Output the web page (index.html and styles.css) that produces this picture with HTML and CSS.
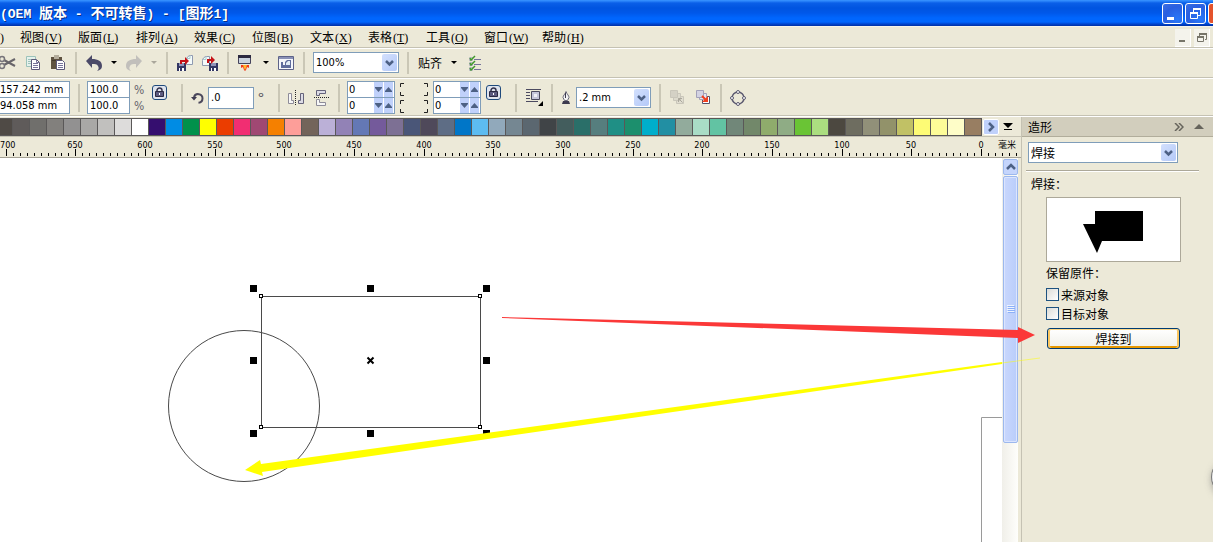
FILE: index.html
```html
<!DOCTYPE html>
<html lang="zh-CN">
<head>
<meta charset="utf-8">
<title>图形1</title>
<link rel="stylesheet" href="styles.css">
</head>
<body>
<div class="app">
  <header class="titlebar">
    <h1 class="title"><span class="mono">(OEM </span>版本<span class="mono"> - </span>不可转售<span class="mono">) - [</span>图形<span class="mono">1]</span></h1>
    <div class="winbtns">
      <button class="winbtn" aria-label="最小化"><svg width="19" height="19"><path d="M4 13h7v3H4z" fill="#fff"/></svg></button>
      <button class="winbtn" aria-label="还原"><svg width="19" height="19" fill="none" stroke="#fff"><path d="M7.500 8V5M14.500 5v6.500H12"/><path d="M7 5h8" stroke-width="2"/><path d="M4.500 8.500h7v6h-7z"/><path d="M4 9h8" stroke-width="2"/></svg></button>
      <button class="winbtn close" aria-label="关闭"></button>
    </div>
  </header>

  <nav class="menubar">
    <span class="menu cut"><span class="key">)</span></span>
    <button class="menu">视图<span class="key">(<u>V</u>)</span></button>
    <button class="menu">版面<span class="key">(<u>L</u>)</span></button>
    <button class="menu">排列<span class="key">(<u>A</u>)</span></button>
    <button class="menu">效果<span class="key">(<u>C</u>)</span></button>
    <button class="menu">位图<span class="key">(<u>B</u>)</span></button>
    <button class="menu">文本<span class="key">(<u>X</u>)</span></button>
    <button class="menu">表格<span class="key">(<u>T</u>)</span></button>
    <button class="menu">工具<span class="key">(<u>O</u>)</span></button>
    <button class="menu">窗口<span class="key">(<u>W</u>)</span></button>
    <button class="menu">帮助<span class="key">(<u>H</u>)</span></button>
    <div class="docbtns">
      <button class="docbtn" aria-label="最小化文档"><svg width="16" height="18"><path d="M4 11h6v2H4z" fill="#77756a"/></svg></button>
      <button class="docbtn" aria-label="还原文档"><svg width="16" height="18" fill="none" stroke="#77756a"><path d="M5.500 7V4.500h7v6H11"/><path d="M5 5h8" stroke-width="2"/><path d="M3.500 8.500h6v4h-6z"/><path d="M3 8h7" stroke-width="2"/></svg></button>
      <button class="docbtn" aria-label="关闭文档"></button>
    </div>
  </nav>

  <div class="toolbar">
    <div class="group first">
      <button class="tool" aria-label="剪切"><svg width="16" height="16" fill="none"><path d="M4 5l11 6M4 10l11-6" stroke="#68656a" stroke-width="2"/><circle cx="2" cy="4" r="2.500" stroke="#77747a" stroke-width="1.500"/><circle cx="2" cy="11" r="2.500" stroke="#77747a" stroke-width="1.500"/></svg></button>
      <button class="tool" aria-label="复制"><svg width="16" height="16"><path d="M1.500 1.500h9v10h-9z" fill="#e6f1ec" stroke="#9cc3ba"/><path d="M3 4.500h6M3 6.500h3M3 8.500h3" stroke="#9cc3ba"/><path d="M6.500 4.500h5l3 3v7h-8z" fill="#fff" stroke="#5c5978"/><path d="M8 8.500h5M8 10.500h5M8 12.500h5M11.500 5v2.500H14" fill="none" stroke="#77749a"/></svg></button>
      <button class="tool" aria-label="粘贴"><svg width="16" height="16"><path d="M1 2h11v12H1z" fill="#5e5240"/><path d="M4 0h5v4H4z" fill="#b4ad9c"/><path d="M2 5.500h9" stroke="#443a2c"/><path d="M6.500 5.500h6l2 2v7h-8z" fill="#fff" stroke="#5c5978"/><path d="M8 8.500h5M8 10.500h5M8 12.500h5" stroke="#77749a"/></svg></button>
    </div>
    <div class="group">
      <button class="tool" aria-label="撤消"><svg width="16" height="16"><path d="M0 6l6-6v4c6 0 10 2 10 7 0 3-2 4-5 5 2-2 2-3 1-5-1-2-3-2-6-2v4z" fill="#4b4a68"/></svg></button>
      <button class="drop" aria-label="撤消列表"><svg width="6" height="3"><path d="M0 0h6L3 3z"/></svg></button>
      <button class="tool" aria-label="重做" disabled><svg width="16" height="16"><path d="M16 6l-6-6v4C4 4 0 6 0 11c0 3 2 4 5 5-2-2-2-3-1-5 1-2 3-2 6-2v4z" fill="#c1bfbb"/></svg></button>
      <button class="drop" aria-label="重做列表" disabled><svg width="6" height="3"><path d="M0 0h6L3 3z" fill="#aaa79b"/></svg></button>
    </div>
    <div class="group">
      <button class="tool" aria-label="导入"><svg width="16" height="16"><path d="M9.500 4.500c0-2 2-4 4-4h2v9h-6z" fill="#f4fafa" stroke="#8f9ab0"/><path d="M9 3.500h4V1" fill="none" stroke="#a9cfd0"/><path d="M0 8h9v8H0z" fill="#333763"/><path d="M2 8h5v3H2z" fill="#8f93b8"/><path d="M2 13h5v3H2z" fill="#fff"/><path d="M3 13h2v3H3z" fill="#333763"/><path d="M3 5h5V2l4 4-4 4V7H5v2H3z" fill="#c51217"/></svg></button>
      <button class="tool" aria-label="导出"><svg width="16" height="16"><path d="M.5 5.500c0-2 2-4 4-4h3v9h-7z" fill="#f4fafa" stroke="#8f9ab0"/><path d="M1 4.500h3V2" fill="none" stroke="#a9cfd0"/><path d="M7 8h9v8H7z" fill="#333763"/><path d="M9 8h5v3H9z" fill="#8f93b8"/><path d="M9 13h5v3H9z" fill="#fff"/><path d="M10 13h2v3h-2z" fill="#333763"/><path d="M5 4h4V1l4 4-4 4V6H7v2H5z" fill="#c51217"/></svg></button>
    </div>
    <div class="group">
      <button class="tool" aria-label="应用程序启动器"><svg width="16" height="16"><path d="M.5.500h12v8H.5z" fill="#c9d3de" stroke="#45435c"/><path d="M0 0h13v3H0z" fill="#2c2a40"/><path d="M3 10h8v3l-2-1-1 3-1 1-1-1-1-3-2 1z" fill="#f2381a"/><path d="M5 10h4l-1 3-1 2-1-2z" fill="#ffb62a"/></svg></button>
      <button class="drop" aria-label="启动器列表"><svg width="6" height="3"><path d="M0 0h6L3 3z"/></svg></button>
      <button class="tool" aria-label="欢迎屏幕"><svg width="16" height="16"><path d="M.5 1.500h15v13H.5z" fill="#f4f6fb" stroke="#5d6388"/><path d="M1 2h14v2H1z" fill="#8a91b6"/><path d="M3 7h2v3h2V7l2-2h4v8H3z" fill="#5e6c9c"/><path d="M8 8l2-2h2v4H8z" fill="#dfeaf5"/></svg></button>
    </div>
    <div class="group tight">
      <div class="combo zoom">
        <select aria-label="缩放级别"><option>100%</option></select>
        <svg class="chev" width="15" height="17"><path d="M4 7l3.500 3.500L11 7" fill="none" stroke="#4d6185" stroke-width="2.500"/></svg>
      </div>
    </div>
    <div class="group last">
      <button class="snap">贴齐</button>
      <button class="drop" aria-label="贴齐列表"><svg width="6" height="3"><path d="M0 0h6L3 3z"/></svg></button>
      <button class="tool options-icon" aria-label="选项"><svg width="14" height="16" fill="none"><path d="M6 4.500h7M6 9.500h7M6 14.500h7" stroke="#77749a"/><path d="M1.500 2.500h3v3h-3zM1.500 7.500h3v3h-3zM1.500 12.500h3v3h-3z" stroke="#b9b6c4"/><path d="M2 3l1 2 4-4M2 8l1 2 4-4M2 13l1 2 4-4" stroke="#3f9a2c" stroke-width="1.500"/></svg></button>
    </div>
  </div>

  <div class="toolbar props">
    <div class="group first size">
      <div class="stack"><input class="field" aria-label="宽度" value="157.242 mm"><input class="field" aria-label="高度" value="94.058 mm"></div>
    </div>
    <div class="group scale">
      <div class="stack"><input class="field" aria-label="水平缩放" value="100.0"><input class="field" aria-label="垂直缩放" value="100.0"></div>
      <div class="units"><span>%</span><span>%</span></div>
      <button class="lock" aria-label="锁定比率"><svg width="11" height="11"><path d="M3 5V3.500a2.500 2.500 0 015 0V5" fill="none" stroke="#35344f" stroke-width="1.500"/><path d="M1.500 4.500h8v5h-8z" fill="#5b5a80" stroke="#2a2942"/><path d="M5 6h1v2H5z" fill="#fff"/></svg></button>
    </div>
    <div class="group angle">
      <svg width="13" height="12" fill="none"><path d="M3 6V5.500a4.300 4.300 0 114.500 5.200" stroke="#4b485c" stroke-width="2"/><path d="M0 5h6L3 8.500z" fill="#3f3c52"/></svg>
      <input class="field" aria-label="旋转角度" value=".0">
      <span class="deg">°</span>
    </div>
    <div class="group mirror">
      <button class="tool" aria-label="水平镜像"><svg width="16" height="16" fill="none"><path d="M.5 3.500h3v7h2v3h-5z" fill="#f7f7f7" stroke="#8e8c99"/><path d="M15.500 3.500h-3v7h-2v3h5z" fill="#dddce6" stroke="#65637a"/><path d="M7.500 0v16" stroke="#222" stroke-dasharray="1 1"/></svg></button>
      <button class="tool" aria-label="垂直镜像"><svg width="16" height="16" fill="none"><path d="M2.500.5h9v3h-6v2h-3z" fill="#dddce6" stroke="#65637a"/><path d="M2.500 9.500h3v3h6v3h-9z" fill="#f7f7f7" stroke="#8e8c99"/><path d="M0 7.500h16" stroke="#222" stroke-dasharray="1 1"/></svg></button>
    </div>
    <div class="group corners">
      <div class="stack">
        <div class="spin"><input aria-label="左上角圆滑度" value="0"><button aria-label="减少"><svg width="9" height="15"><path d="M1 5h7v1L4.500 10 1 6z" fill="#4d6185"/></svg></button><button aria-label="增加"><svg width="9" height="15"><path d="M1 10h7V9L4.500 5 1 9z" fill="#4d6185"/></svg></button></div>
        <div class="spin"><input aria-label="左下角圆滑度" value="0"><button aria-label="减少"><svg width="9" height="15"><path d="M1 5h7v1L4.500 10 1 6z" fill="#4d6185"/></svg></button><button aria-label="增加"><svg width="9" height="15"><path d="M1 10h7V9L4.500 5 1 9z" fill="#4d6185"/></svg></button></div>
      </div>
      <svg width="28" height="30" fill="none" stroke="#222"><path d="M4 .5H.5V4M.5 9v3.500H4M24 .5h3.500V4M27.500 9v3.500H24M4 17.500H.5V21M.5 26v3.500H4M24 17.500h3.500V21M27.500 26v3.500H24"/></svg>
      <div class="stack">
        <div class="spin"><input aria-label="右上角圆滑度" value="0"><button aria-label="减少"><svg width="9" height="15"><path d="M1 5h7v1L4.500 10 1 6z" fill="#4d6185"/></svg></button><button aria-label="增加"><svg width="9" height="15"><path d="M1 10h7V9L4.500 5 1 9z" fill="#4d6185"/></svg></button></div>
        <div class="spin"><input aria-label="右下角圆滑度" value="0"><button aria-label="减少"><svg width="9" height="15"><path d="M1 5h7v1L4.500 10 1 6z" fill="#4d6185"/></svg></button><button aria-label="增加"><svg width="9" height="15"><path d="M1 10h7V9L4.500 5 1 9z" fill="#4d6185"/></svg></button></div>
      </div>
      <button class="lock" aria-label="全部圆角"><svg width="11" height="11"><path d="M3 5V3.500a2.500 2.500 0 015 0V5" fill="none" stroke="#35344f" stroke-width="1.500"/><path d="M1.500 4.500h8v5h-8z" fill="#5b5a80" stroke="#2a2942"/><path d="M5 6h1v2H5z" fill="#fff"/></svg></button>
    </div>
    <div class="group wrap">
      <button class="tool" aria-label="段落文本换行"><svg width="18" height="17"><path d="M0 .5h15M0 3.500h4M0 6.500h4M0 9.500h4M0 12.500h12" stroke="#4c4a60"/><path d="M5.500 2.500h8v8h-8z" fill="#c5c5da" stroke="#4c4a60"/><path d="M8 5h3v3H8z" fill="#f0f0f8"/><path d="M17 12v5h-5z"/></svg></button>
    </div>
    <div class="group pen">
      <svg width="10" height="14"><path d="M5 .5c1 3 3 4 3 6L6.500 9.500h-3L2 6.500c0-2 2-3 3-6z" fill="#f3f3f3" stroke="#6a687a"/><path d="M4.500 2v5" stroke="#3d3b4f"/><path d="M2 10h6l1 3H1z" fill="#3d3b4f"/></svg>
      <div class="combo outline">
        <select aria-label="轮廓宽度"><option>.2 mm</option></select>
        <svg class="chev" width="15" height="17"><path d="M4 7l3.500 3.500L11 7" fill="none" stroke="#4d6185" stroke-width="2.500"/></svg>
      </div>
    </div>
    <div class="group order">
      <button class="tool" aria-label="到图层前面" disabled><svg width="15" height="15" stroke="#c9c6ba"><path d="M6.500 6.500h7v7h-7z" fill="#e0ddd0"/><path d="M3.500 3.500h7v7h-7z" fill="#dddacd"/><path d="M.5.500h7v7h-7z" fill="#d4d1c5"/><path d="M8.500 8.500l4 4M8.500 12V8.500H12" stroke="#aaa79c" fill="none"/></svg></button>
      <button class="tool" aria-label="到图层后面"><svg width="15" height="15"><path d="M6.500 6.500h7v7h-7z" fill="#fff" stroke="#55536a"/><path d="M3.500 3.500h7v6h-7z" fill="#e6e5ef" stroke="#a3a1b9"/><path d="M.5.500h7v7h-7z" fill="#d3d2e2" stroke="#a3a1b9"/><path d="M6 6l4 4" stroke="#f2401f" stroke-width="2"/><path d="M12 6v6H6z" fill="#f2401f"/></svg></button>
    </div>
    <div class="group last">
      <button class="tool" aria-label="转换为曲线"><svg width="16" height="16" fill="#fff" stroke="#5c5a70"><circle cx="8" cy="8" r="6" fill="none" stroke-width="1.500"/><circle cx="8" cy="2" r="1.500"/><circle cx="8" cy="14" r="1.500"/><circle cx="2" cy="8" r="1.500"/><circle cx="14" cy="8" r="1.500"/></svg></button>
    </div>
  </div>

  <main class="main">
    <section class="work">
      <div class="palette">
        <div class="swatches" id="swatches"></div>
        <button class="more" aria-label="更多颜色"><svg width="14" height="14"><path d="M5 3l4 4-4 4" fill="none" stroke="#4d6185" stroke-width="2.500"/></svg></button>
        <button class="drop" aria-label="展开调色板"><svg width="10" height="8"><path d="M0 0h10L5 5zM1 6h8v1H1z"/></svg></button>
      </div>
      <div class="ruler">
        <svg id="ruler" width="100%" height="20"></svg>
        <span class="mm">毫米</span>
      </div>
      <div class="view">
        <svg class="canvas" viewBox="0 158 1002 384" preserveAspectRatio="xMinYMin slice" fill="none">
          <g stroke="#4a4a4a">
            <circle cx="244" cy="406" r="75.500"/>
            <path d="M261.500 296.500h219v131h-219z"/>
          </g>
          <path d="M1002 417.500h-20.500V542" stroke="#9a9a9a"/>
          <g fill="#fff" stroke="#000" shape-rendering="crispEdges">
            <path d="M259.500 294.500h3v3h-3zM478.500 294.500h3v3h-3zM259.500 425.500h3v3h-3zM478.500 425.500h3v3h-3z"/>
          </g>
          <path d="M250 285h7v7h-7zM367 285h7v7h-7zM483 285h7v7h-7zM250 357h7v7h-7zM483 357h7v7h-7zM250 430h7v7h-7zM367 430h7v7h-7zM483 430h7v7h-7z" fill="#000"/>
          <path d="M367.500 357.500l6 6M373.500 357.500l-6 6" stroke="#000" stroke-width="2"/>
        </svg>
        <div class="scroll">
          <button class="up" aria-label="向上滚动"><svg width="14" height="14"><path d="M3 9l4-4 4 4" fill="none" stroke="#4d6185" stroke-width="2.500"/></svg></button>
          <div class="thumb"><svg width="8" height="9"><path d="M0 .5h7M0 2.500h7M0 4.500h7M0 6.500h7" stroke="#eef4fe"/><path d="M1 1.500h7M1 3.500h7M1 5.500h7M1 7.500h7" stroke="#8cb0f8"/></svg></div>
        </div>
      </div>
    </section>

    <aside class="docker">
      <div class="dockhead">
        <h2>造形</h2>
        <button class="drop" aria-label="折叠"><svg width="10" height="8" fill="none" stroke="#66645c" stroke-width="1.500"><path d="M1 0l4 4-4 4M5 0l4 4-4 4"/></svg></button>
        <button class="drop" aria-label="收起"><svg width="10" height="5"><path d="M0 5l5-5 5 5z" fill="#66645c"/></svg></button>
      </div>
      <div class="dockbody">
        <div class="combo shape">
          <select aria-label="造形方式"><option>焊接</option></select>
          <svg class="chev" width="15" height="17"><path d="M4 7l3.500 3.500L11 7" fill="none" stroke="#4d6185" stroke-width="2.500"/></svg>
        </div>
        <hr>
        <p class="caption">焊接：</p>
        <div class="options">
          <div class="preview"><svg width="133" height="63"><path d="M48 13h48v30H55L50 55 36 26h12z"/></svg></div>
          <p class="keep">保留原件：</p>
          <label class="check"><input type="checkbox">来源对象</label>
          <label class="check"><input type="checkbox">目标对象</label>
          <button class="weld">焊接到</button>
        </div>
      </div>
    </aside>
  </main>

  <svg class="arrows" width="1213" height="542">
    <path d="M502 317l516 13v-3l17 8-17 8v-5L502 318z" fill="#fb3838"/>
    <path d="M245 470l15-10 1 4L1002 362v2L262 472l1 4z" fill="#ff0"/>
    <path d="M1002 363l38-5" stroke="#ff0" stroke-opacity=".5"/>
  </svg>
  <span class="knob"></span>
</div>
<script src="app.js"></script>
</body>
</html>
```
FILE: styles.css
```css
* { box-sizing: border-box; }
body {
  margin: 0;
  background: #ece9d8;
  color: #000;
  font: 12px/16px "Noto Sans CJK SC", sans-serif;
}
button, input, select { font: inherit; color: inherit; border-radius: 0; }
button { margin: 0; padding: 0; border: 0; background: none; }
svg { display: block; flex: none; }
h1, h2, p { margin: 0; font-size: 12px; font-weight: 400; }
.app { position: relative; display: flex; flex-direction: column; min-height: 100vh; overflow: hidden; }

.titlebar {
  display: flex; align-items: center; justify-content: space-between;
  height: 26px;
  background: linear-gradient(#3a94ff 0, #2b86fb 1px, #0a5fe8 3px, #0054e0 8px, #0058ea 13px, #0066fe 18px, #0066fe 22px, #0045cf 24px, #0030a4 26px);
}
.title { color: #fff; font-size: 14px; font-weight: 700; line-height: 20px; white-space: pre; text-shadow: 1px 1px #0a2f86; }
.mono { font-family: "Liberation Mono", monospace; font-size: 13px; }
.winbtns { display: flex; gap: 2px; margin: 0 -16px 0 0; }
.winbtn {
  width: 21px; height: 21px; border: 1px solid #fff; border-radius: 3px;
  background: radial-gradient(circle at 75% 80%, #2a78f8, #2a5fe0 60%, #3c70e2);
}
.winbtn.close { background: #e4532c; }

.menubar { display: flex; align-items: center; gap: 16px; height: 23px; border-top: 1px solid #f6f4ea; border-bottom: 1px solid #fff; box-shadow: inset 0 -1px #c5c2b3; }
.menu { width: 42px; white-space: nowrap; text-align: left; }
.key { padding-left: 1px; font-family: "Liberation Serif", serif; font-size: 12px; }
.menu.cut { width: 4px; }
.cut .key { padding: 0; }
.docbtns { display: flex; gap: 3px; margin: 0 -16px 0 auto; }
.docbtn { width: 16px; height: 18px; background: #f4f3ec; border-right: 1px solid #fff; border-bottom: 1px solid #fff; }

.toolbar { display: flex; align-items: center; height: 30px; padding-bottom: 2px; border-bottom: 1px solid #fff; box-shadow: inset 0 -1px #c5c2b3; }
.group { display: flex; align-items: center; gap: 9px; padding: 0 9px; }
.toolbar .group { height: 22px; border-right: 2px solid #cac7b6; }
.toolbar .group.first { padding-left: 0; }
.toolbar .group.last { border: 0; }
.toolbar .group.tight { padding: 0 8px; }
.combo { position: relative; height: 21px; border: 1px solid #7f9db9; background: #fff; }
.combo select { display: block; width: 100%; height: 19px; padding: 0 2px; border: 0; background: none; appearance: none; }
.chev { position: absolute; right: 1px; top: 1px; border-radius: 2px; background: linear-gradient(135deg, #d3e0fd, #b4c9f8); pointer-events: none; }
.zoom { width: 86px; }
.zoom select, .outline select, .field, .spin input { font: 11px/14px "DejaVu Sans Condensed", "DejaVu Sans", sans-serif; }
.snap { width: 24px; white-space: nowrap; }
.options-icon { margin-left: 2px; }

.props { height: 38px; padding-bottom: 0; }
.toolbar.props .group { height: 28px; }
.field { height: 17px; padding: 0 2px; border: 1px solid #7f9db9; background: #fff; }
.stack { display: flex; flex-direction: column; }
.stack > :last-child { margin-top: -1px; }
.size .field { width: 70px; padding: 0; border-left: 0; }
.toolbar .size { padding-right: 8px; }
.toolbar .scale { gap: 4px; padding: 0 14px 0 7px; }
.scale .field { width: 43px; }
.units { display: flex; flex-direction: column; width: 10px; color: #66646c; font: 12px/16px "DejaVu Sans Condensed", sans-serif; }
.lock { display: flex; align-items: center; justify-content: center; width: 15px; height: 15px; margin: 0 0 10px 4px; border: 1px solid #1f4a7c; border-radius: 3px; background: #dfe4ee; }
.toolbar .angle { gap: 4px; padding: 0 14px 0 8px; }
.angle .field { width: 46px; height: 22px; }
.deg { width: 6px; font-size: 16px; color: #55535c; }
.toolbar .mirror { gap: 10px; padding: 0 8px; }
.toolbar .corners { gap: 5px; padding: 0 14px 0 7px; }
.corners .lock { margin-left: 0; }
.spin { display: flex; align-items: center; width: 48px; height: 17px; padding-right: 1px; border: 1px solid #7f9db9; background: #fff; }
.spin input { flex: 1; min-width: 0; height: 15px; padding: 0 0 0 1px; border: 0; background: none; }
.spin button { width: 9px; margin-left: 1px; background: #c0d1fb; }
.toolbar .wrap { padding: 0 7px 0 9px; }
.toolbar .pen { gap: 5px; padding: 0 8px; }
.outline { width: 75px; }
.toolbar .order { gap: 11px; }
.toolbar .order + .group { padding-left: 8px; }

.main { display: flex; flex: 1; }
.work { display: flex; flex-direction: column; flex: 1; min-width: 0; }
.palette { display: flex; align-items: center; height: 20px; border-bottom: 1px solid #c5c2b3; }
.swatches { display: flex; border: solid #5a5858; border-width: 1px 0; margin-right: 1px; }
.swatch { width: 17px; height: 16px; border-right: 1px solid #5a5858; }
.swatch:first-child { width: 13px; }
.more { width: 16px; height: 16px; margin-right: 4px; border: 1px solid #fff; border-radius: 2px; background: #c0d1fb; }
.ruler { position: relative; height: 21px; border-bottom: 1px solid #a5a295; }
.ruler text { font: 9px "DejaVu Sans Condensed", sans-serif; text-anchor: middle; }
.ruler text.edge { text-anchor: start; }
.mm { position: absolute; right: 5px; top: 0; font-size: 9px; line-height: 16px; }
.view { display: flex; flex: 1; }
.canvas { flex: 1; width: 0; min-width: 0; height: 384px; background: #fff; }
.scroll { display: flex; flex-direction: column; gap: 1px; width: 19px; padding: 1px 3px 0 1px; background: linear-gradient(90deg, #f0efe9, #fefefb 16px, #ece9d8 16px); }
.up { width: 15px; height: 16px; border: 1px solid #9cb8ee; border-radius: 2px; background: #c5d5fc; }
.thumb { display: flex; align-items: center; justify-content: center; width: 15px; height: 267px; border: 1px solid #9cb8ee; border-radius: 2px; background: linear-gradient(90deg, #c9d7fd, #b9cdfa); box-shadow: inset 0 0 0 1px #dbe5fe; }

.docker { width: 192px; border-left: 1px solid #c5c2b3; }
.dockhead { display: flex; align-items: center; gap: 10px; height: 20px; padding: 0 9px 0 6px; background: #d2cebd; border-bottom: 1px solid #b1ad9b; }
.dockhead h2 { margin-right: auto; }
.dockbody { padding: 5px 14px 0 6px; }
.shape { width: 150px; }
hr { height: 2px; margin: 7px 0 4px -2px; border: 0; border-top: 1px solid #aca899; background: #fff; }
.caption { padding: 0 3px; }
.options { padding: 5px 0 0 18px; }
.preview { width: 135px; height: 65px; border: 1px solid #aca899; background: #fff; }
.keep { margin: 3px 0 4px; }
.check { display: flex; align-items: center; gap: 2px; height: 19px; }
.check input { appearance: none; width: 13px; height: 13px; margin: 0; border: 1px solid #1d5280; background: linear-gradient(135deg, #dcdcd7, #fff); }
.weld { width: 133px; height: 21px; margin: 5px 0 0 1px; border: 1px solid #003c74; border-radius: 3px; background: linear-gradient(#fff, #f0f0ea); box-shadow: inset 0 1px #fdd889, inset 2px 0 #fbc761, inset -2px 0 #fbc761, inset 0 -2px #e59700; line-height: 17px; }

.arrows { position: absolute; left: 0; top: 0; pointer-events: none; }
.knob { position: absolute; right: -38px; top: 457px; width: 40px; height: 40px; border: 1px solid #777; border-radius: 50%; background: #eee; box-shadow: 0 3px 6px #7778; }
```
FILE: app.js
```js
const colors = ("4f4a45 5f5b5a 706f6c 82807d 929191 a9a8a6 c1c0be dddcdb ffffff 350e6f 008ce4 00914b ffff00 eb3d00 f12e72 a04873 " +
  "f58000 fd9e99 73645a bbb0d7 9282b6 6478b5 745a9b 7d7094 4a5678 4f495a 5e6d85 0076c8 5dbcf1 91a9bb 758792 5b6770 404447 " +
  "435d5d 2a6f69 567e7e 1f8f85 1c8f6d 00aecb 228fa3 92ab9c a9dcc6 62c3a3 718779 72886a 8fac6c 8fac85 6ac435 abde80 4c4840 " +
  "6e6d60 919079 92926a c1c165 fdfb75 fdfc98 fefdc8 987e62").split(" ");
const swatches = document.getElementById("swatches");
for (const color of colors) {
  const swatch = document.createElement("button");
  swatch.className = "swatch";
  swatch.style.background = "#" + color;
  swatch.setAttribute("aria-label", "#" + color);
  swatches.append(swatch);
}

// Ruler: one tick every 5 mm, a long tick and a label every 50 mm.
const origin = 981;
const step = 69.66 / 10;
let marks = "";
let labels = "";
for (let i = -5; i <= 140; i++) {
  const x = Math.round(origin - i * step);
  const major = i % 10 === 0;
  marks += major ? `M${x} 12h1v7h-1z` : `M${x} 16h1v3h-1z`;
  if (major) labels += x < 10 ? `<text class="edge" x="0" y="11">${i * 5}</text>` : `<text x="${x}" y="11">${i * 5}</text>`;
}
document.getElementById("ruler").innerHTML = `<path d="${marks}"/>${labels}`;
```
